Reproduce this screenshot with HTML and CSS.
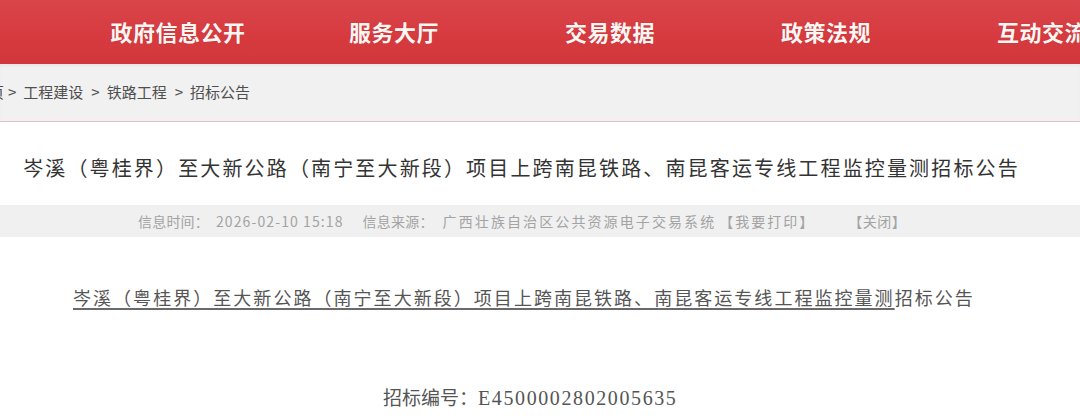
FILE: index.html
```html
<!DOCTYPE html>
<html lang="zh-CN">
<head>
<meta charset="utf-8">
<link rel="stylesheet" href="styles.css">
</head>
<body>
<header class="nav">
  <a class="nav-item">政府信息公开</a>
  <a class="nav-item">服务大厅</a>
  <a class="nav-item">交易数据</a>
  <a class="nav-item">政策法规</a>
  <a class="nav-item">互动交流</a>
</header>
<div class="crumb">
  <span class="crumb-text">首页<span class="sep sep-first">&gt;</span>工程建设<span class="sep">&gt;</span>铁路工程<span class="sep">&gt;</span>招标公告</span>
</div>
<h1 class="title">岑溪（粤桂界）至大新公路（南宁至大新段）项目上跨南昆铁路、南昆客运专线工程监控量测招标公告</h1>
<div class="meta">
  <span class="meta-label">信息时间：</span>
  <span class="meta-date">2026-02-10 15:18</span>
  <span class="meta-label meta-src-label">信息来源：</span>
  <span class="meta-src">广西壮族自治区公共资源电子交易系统</span>
  <span class="meta-print">【我要打印】</span>
  <span class="meta-close">【关闭】</span>
</div>
<p class="lead"><u class="lead-link">岑溪（粤桂界）至大新公路（南宁至大新段）项目上跨南昆铁路、南昆客运专线工程监控量测</u>招标公告</p>
<p class="code">招标编号：<span class="code-num">E4500002802005635</span></p>
</body>
</html>
```
FILE: styles.css
```css
html, body {
  margin: 0;
  padding: 0;
  background: #ffffff;
  width: 1080px;
  height: 420px;
  overflow: hidden;
  font-family: "Noto Sans CJK SC", "Noto Sans", sans-serif;
}

.nav {
  height: 64px;
  background: linear-gradient(180deg, #d9454a 0%, #d63a3f 60%, #d1373c 100%);
  display: flex;
  align-items: center;
  padding-left: 70px;
  box-sizing: border-box;
  white-space: nowrap;
  overflow: hidden;
}

.nav-item {
  flex: 0 0 216px;
  text-align: center;
  color: #fff6f4;
  font-size: 22px;
  font-weight: 700;
  letter-spacing: 0.5px;
  text-shadow: 0 0 1px rgba(120, 20, 20, 0.4);
  margin-top: -2px;
}

.crumb {
  height: 57px;
  background: #f1f1f1;
  border-bottom: 1px solid #e2c2c4;
  display: flex;
  align-items: center;
  overflow: hidden;
  box-shadow: inset 0 2px 2px rgba(0,0,0,0.04);
}

.crumb-text {
  margin-left: -26px;
  font-size: 15px;
  color: #4f4f4f;
  white-space: nowrap;
  margin-top: -2px;
}

.sep {
  display: inline-block;
  padding: 0 7px 0 8px;
}

.sep-first {
  padding-left: 4px;
}

.title {
  margin: 0;
  height: 83px;
  display: flex;
  align-items: center;
  justify-content: center;
  padding: 7px 37px 0 0;
  box-sizing: border-box;
  font-size: 20px;
  letter-spacing: 2.15px;
  font-weight: 400;
  color: #333333;
  white-space: nowrap;
}

.meta {
  height: 32px;
  background: #f0f0f1;
  display: flex;
  align-items: center;
  padding-left: 138px;
  font-size: 14px;
  color: #a3a3a3;
  white-space: nowrap;
}

.meta-label { letter-spacing: 0.2px; }
.meta-date { margin-left: 7px; letter-spacing: 1.1px; }
.meta-src-label { margin-left: 19px; }
.meta-src { margin-left: 9px; letter-spacing: 2.1px; }
.meta-print { margin-left: 3px; letter-spacing: 2px; }
.meta-close { margin-left: 33px; letter-spacing: 0.5px; }

.lead {
  margin: 48px 0 0 73px;
  font-size: 18px;
  letter-spacing: 2.04px;
  color: #555555;
  white-space: nowrap;
  line-height: 24px;
}

.lead-link {
  text-decoration: underline;
  text-decoration-thickness: 2px;
  text-underline-offset: 3px;
  text-decoration-color: #6a6a6a;
}

.code {
  margin: 76px 0 0 383px;
  font-size: 19px;
  color: #555555;
  white-space: nowrap;
  line-height: 24px;
}

.code-num {
  font-family: "Liberation Serif", "DejaVu Serif", serif;
  font-size: 20px;
  letter-spacing: 1.6px;
}
```
